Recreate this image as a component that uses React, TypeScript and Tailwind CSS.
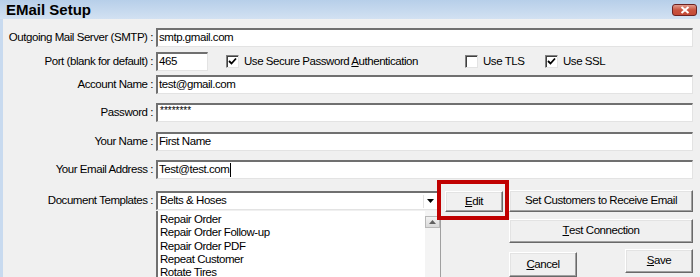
import React from 'react';

const font = { fontFamily: '"Liberation Sans", Arial, sans-serif' };

// classic dialog text: narrow 8pt-ish look
const txt = 'text-[11.5px] tracking-[-0.45px] text-black';

const sunken =
  'bg-white border-t-2 border-l-2 border-b border-r border-t-[#707070] border-l-[#707070] border-b-[#e3e3e3] border-r-[#e3e3e3]';

const raised = `bg-[#f0f0f0] border border-t-white border-l-white border-b-[#696969] border-r-[#696969] shadow-[inset_-1px_-1px_0_#a0a0a0,inset_1px_1px_0_#e3e3e3] flex items-center justify-center ${txt}`;

function Label({ children }: { children: React.ReactNode }) {
  return <div className={`w-[153px] shrink-0 pr-[3px] text-right whitespace-nowrap ${txt}`}>{children}</div>;
}

function Field({ value, className = '' }: { value: string; className?: string }) {
  return (
    <div className={`${sunken} h-[19px] flex items-center pl-[1px] ${txt} ${className}`}>
      {value}
    </div>
  );
}

function Check({ checked }: { checked: boolean }) {
  return (
    <div className="w-[13px] h-[13px] shrink-0 bg-white border border-t-[#808080] border-l-[#808080] border-b-[#e3e3e3] border-r-[#e3e3e3] shadow-[inset_1px_1px_0_#404040] flex items-center justify-center">
      {checked && (
        <svg width="9" height="9" viewBox="0 0 9 9">
          <path d="M1 4 L3.5 6.5 L8 1.5" stroke="#000" strokeWidth="1.8" fill="none" />
        </svg>
      )}
    </div>
  );
}

function Row({ label, children, mt }: { label: string; children: React.ReactNode; mt: string }) {
  return (
    <div className={`flex items-center ${mt}`}>
      <Label>{label}</Label>
      {children}
    </div>
  );
}

const templates = ['Repair Order', 'Repair Order Follow-up', 'Repair Order PDF', 'Repeat Customer', 'Rotate Tires'];

export default function App() {
  return (
    <div className="relative w-[700px] h-[277px] overflow-hidden bg-[#f0f0f0]" style={font}>
      {/* title bar */}
      <div className="h-[19px] bg-gradient-to-b from-[#b7cfe9] to-[#d2e1f2] flex items-center justify-between pl-[6px] pr-[3px]">
        <span className="text-[15px] font-bold text-black leading-none">EMail Setup</span>
        <div className="w-[25px] h-[12px] mt-[1px] rounded-[3px] border border-[#6b2222] bg-gradient-to-b from-[#e09a8c] via-[#c9533f] to-[#c44a37] flex items-center justify-center">
          <svg width="10" height="8" viewBox="0 0 10 8">
            <path d="M1.5 1 L8.5 7 M8.5 1 L1.5 7" stroke="#fff" strokeWidth="2" />
          </svg>
        </div>
      </div>

      {/* body */}
      <div className="border-l-[3px] border-[#c8daef] h-[258px]">
        <Row label="Outgoing Mail Server (SMTP) :" mt="pt-[9px]">
          <Field value="smtp.gmail.com" className="w-[537px]" />
        </Row>

        <Row label="Port (blank for default) :" mt="mt-[5px]">
          <Field value="465" className="w-[52px]" />
          <div className="flex items-center w-[239px] ml-[18px]">
            <Check checked />
            <span className={`ml-[5px] ${txt}`}>
              Use Secure Password <span className="underline">A</span>uthentication
            </span>
          </div>
          <div className="flex items-center w-[80px]">
            <Check checked={false} />
            <span className={`ml-[5px] ${txt}`}>Use TLS</span>
          </div>
          <div className="flex items-center">
            <Check checked />
            <span className={`ml-[5px] ${txt}`}>Use SSL</span>
          </div>
        </Row>

        <Row label="Account Name :" mt="mt-[4px]">
          <Field value="test@gmail.com" className="w-[537px]" />
        </Row>

        <Row label="Password :" mt="mt-[9px]">
          <div className={`${sunken} h-[19px] w-[537px] pl-[2px] pt-[1px] text-[10px] leading-[10px] text-black`}>
            ********
          </div>
        </Row>

        <Row label="Your Name :" mt="mt-[10px]">
          <Field value="First Name" className="w-[537px]" />
        </Row>

        <Row label="Your Email Address :" mt="mt-[9px]">
          <div className={`${sunken} h-[19px] w-[537px] flex items-center pl-[1px] ${txt}`}>
            Test@test.com<span className="w-px h-[14px] bg-black ml-[1px]" />
          </div>
        </Row>

        {/* document templates */}
        <div className="flex items-start mt-[12px]">
          <div className="h-[19px] flex items-center">
            <Label>Document Templates :</Label>
          </div>
          <div className="w-[285px] flex flex-col">
            <div className={`${sunken} h-[19px] w-[282px] flex items-center justify-between ${txt}`}>
              <span className="pl-[2px]">Belts &amp; Hoses</span>
              <div className="w-[14px] h-[13px] border-l border-[#e3e3e3] flex items-center justify-center">
                <svg width="7" height="4" viewBox="0 0 7 4">
                  <path d="M0 0 H7 L3.5 4 Z" fill="#000" />
                </svg>
              </div>
            </div>
            <div className="h-[70px] bg-white border-l-2 border-[#707070] border-r border-r-[#a0a0a0] flex mt-px">
              <div className={`flex-1 pt-[2px] pl-[2px] leading-[13.3px] ${txt}`}>
                {templates.map(t => (
                  <div key={t}>{t}</div>
                ))}
              </div>
              <div className="w-[15px] bg-[#f4f4f4] pt-[5px]">
                <div className="h-[12px] w-[15px] bg-gradient-to-b from-[#f2f2f2] to-[#d9d9d9] border border-[#b8b8b8] flex items-center justify-center">
                  <svg width="7" height="4" viewBox="0 0 7 4">
                    <path d="M0 4 H7 L3.5 0 Z" fill="#606060" />
                  </svg>
                </div>
              </div>
            </div>
          </div>

          <button className={`${raised} w-[58px] h-[21px] ml-[4px]`}>
            <span className="underline">E</span>dit
          </button>

          <div className="ml-[6px] w-[184px] flex flex-col -mt-[1px]">
            <button className={`${raised} h-[22px]`}>Set Customers to Receive Email</button>
            <button className={`${raised} h-[24px] mt-[7px]`}>
              <span className="underline">T</span>est Connection
            </button>
            <div className="flex justify-between items-start mt-[6px]">
              <button className={`${raised} w-[68px] h-[25px] mt-[3px]`}>
                <span className="underline">C</span>ancel
              </button>
              <button className={`${raised} w-[68px] h-[24px]`}>
                <span className="underline">S</span>ave
              </button>
            </div>
          </div>
        </div>
      </div>

      {/* annotation highlight around Edit */}
      <div className="absolute left-[437px] top-[180px] w-[72px] h-[40px] border-4 border-[#c00000] pointer-events-none" />
    </div>
  );
}
